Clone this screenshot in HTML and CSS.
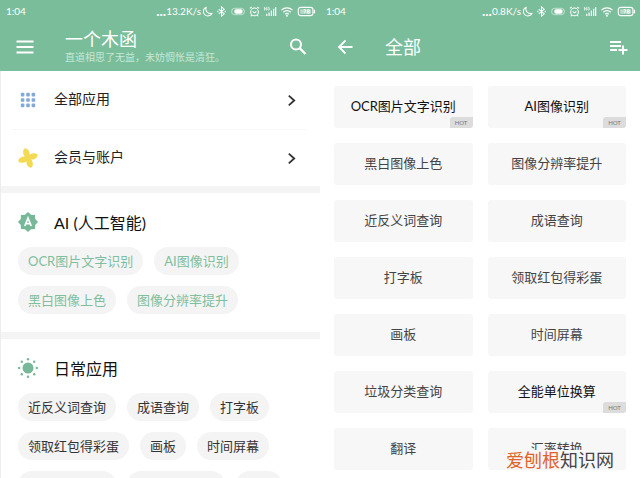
FILE: index.html
```html
<!DOCTYPE html>
<html lang="zh-CN">
<head>
    <meta charset="UTF-8">
    <meta name="viewport" content="width=device-width, initial-scale=1">
    <title>一个木函</title>
    <link rel="stylesheet" href="styles.css">
</head>
<body>
    <!-- Shared icons -->
    <svg class="sprite" aria-hidden="true">
        <symbol id="i-moon" viewBox="0 0 12 12"><path d="M4.5 1.2A5 5 0 1 0 11 7.9 5.2 5.2 0 0 1 4.5 1.2z" fill="none" stroke="currentColor" stroke-width="1.1" stroke-linejoin="round"/></symbol>
        <symbol id="i-bluetooth" viewBox="0 0 12 12"><path d="M3 3.5l6 5L6 11V1l3 2.5-6 5" fill="none" stroke="currentColor" stroke-width="1.1"/><circle cx="2" cy="6" r=".8" fill="currentColor"/><circle cx="10" cy="6" r=".8" fill="currentColor"/></symbol>
        <symbol id="i-pill" viewBox="0 0 16 12"><rect x="1" y="2.5" width="14" height="7" rx="3.5" fill="none" stroke="currentColor" opacity=".6"/><rect x="4" y="3.5" width="9" height="5" rx="2" fill="currentColor"/></symbol>
        <symbol id="i-alarm" viewBox="0 0 12 12"><circle cx="6" cy="6.5" r="4.2" fill="none" stroke="currentColor" stroke-width="1.1"/><path d="M1 2.7l2-1.6M11 2.7L9 1.1M4 6l2 1.5L8 6M3 10l-1 1.2M9 10l1 1.2" fill="none" stroke="currentColor" stroke-width="1.1"/></symbol>
        <symbol id="i-signal" viewBox="0 0 14 12"><path d="M3.5 11V8.5M6 11V7M8.5 11V5M11 11V3M13.2 11V1" stroke="currentColor" stroke-width="1.3"/><path d="M1 1v4M3 1v4M1 3h2M4.7 1.5v3h1l1-1v-1l-1-1z" fill="none" stroke="currentColor" stroke-width=".7"/></symbol>
        <symbol id="i-wifi" viewBox="0 0 14 12"><path d="M1 4.5a8.5 8.5 0 0 1 12 0M3 6.8a5.6 5.6 0 0 1 8 0M5 9a3 3 0 0 1 4 0" fill="none" stroke="currentColor" stroke-width="1.4"/><circle cx="7" cy="10.6" r="1" fill="currentColor"/></symbol>
        <symbol id="i-battery" viewBox="0 0 20 12"><rect x="1" y="1.5" width="16" height="9" rx="2.5" fill="none" stroke="currentColor" stroke-width="1.2"/><rect x="3" y="3.5" width="12" height="5" rx="1" fill="currentColor" opacity=".45"/><path d="M18.6 4v4" stroke="currentColor" stroke-width="1.5"/><path d="M7 4h2l-1 4M11 4h2v4h-2zM11 6h2" fill="none" stroke="currentColor" stroke-width=".8"/></symbol>
        <symbol id="i-chevron" viewBox="0 0 12 12"><path d="M3.5 1.5L8.500 6l-5 4.500" fill="none" stroke="currentColor" stroke-width="1.7"/></symbol>
    </svg>

    <main class="screens">
        <section class="screen screen-home">
            <header class="header">
                <div class="status-bar">
                    <span>1:04</span>
                    <div class="status-icons">
                        <span class="dots">...</span><span class="speed">13.2K/s</span>
                        <svg class="s-icon"><use href="#i-moon"/></svg>
                        <svg class="s-icon"><use href="#i-bluetooth"/></svg>
                        <svg class="s-icon s-pill"><use href="#i-pill"/></svg>
                        <svg class="s-icon"><use href="#i-alarm"/></svg>
                        <svg class="s-icon s-wide"><use href="#i-signal"/></svg>
                        <svg class="s-icon s-wide"><use href="#i-wifi"/></svg>
                        <svg class="s-icon s-battery"><use href="#i-battery"/></svg>
                    </div>
                </div>
                <div class="toolbar">
                    <button class="icon-btn" aria-label="菜单">
                        <svg viewBox="0 0 20 20"><path d="M1.500 4.500h17M1.500 10h17M1.500 15.500h17" stroke="currentColor" stroke-width="2"/></svg>
                    </button>
                    <div class="toolbar-title">
                        <h1>一个木函</h1>
                        <p>直道相思了无益，未妨惆怅是清狂。</p>
                    </div>
                    <button class="icon-btn" aria-label="搜索">
                        <svg viewBox="0 0 20 20"><circle cx="8" cy="7.500" r="5" fill="none" stroke="currentColor" stroke-width="2"/><path d="M11.500 11l6 6" stroke="currentColor" stroke-width="2.4"/></svg>
                    </button>
                </div>
            </header>

            <nav class="menu">
                <a class="menu-item" href="#all">
                    <svg class="menu-icon" viewBox="0 0 20 20" fill="#82a9d8">
                        <rect x="2" y="2" width="4" height="4" rx="1"/><rect x="8" y="2" width="4" height="4" rx="1"/><rect x="14" y="2" width="4" height="4" rx="1"/>
                        <rect x="2" y="8" width="4" height="4" rx="1"/><rect x="8" y="8" width="4" height="4" rx="1"/><rect x="14" y="8" width="4" height="4" rx="1"/>
                        <rect x="2" y="14" width="4" height="4" rx="1"/><rect x="8" y="14" width="4" height="4" rx="1"/><rect x="14" y="14" width="4" height="4" rx="1"/>
                    </svg>
                    <span>全部应用</span>
                    <svg class="chevron"><use href="#i-chevron"/></svg>
                </a>
                <a class="menu-item" href="#account">
                    <svg class="menu-icon" viewBox="0 0 20 20" fill="#f3da55">
                        <path id="blade" d="M10 11C5.500 9.500 4 4 6 1C7 0 8 .3 9 1C12 3 12.500 7 10 11z"/>
                        <use href="#blade" transform="rotate(90 10 10)"/>
                        <use href="#blade" transform="rotate(180 10 10)"/>
                        <use href="#blade" transform="rotate(270 10 10)"/>
                    </svg>
                    <span>会员与账户</span>
                    <svg class="chevron"><use href="#i-chevron"/></svg>
                </a>
            </nav>

            <section class="group">
                <h2 class="group-title">
                    <svg class="menu-icon" viewBox="0 0 20 20">
                        <path d="M10 0l3 2.8 4.100.1.1 4.100L20 10l-2.800 3-.1 4.100-4.100.1L10 20l-3-2.800-4.100-.1-.1-4.100L0 10l2.800-3 .1-4.100L7 2.800z" fill="#76b898"/>
                        <path d="M6.8 14L10 6l3.200 8M8 11.600h4" fill="none" stroke="#fff" stroke-width="1.7"/>
                    </svg>
                    AI (人工智能)
                </h2>
                <div class="chips chips-green">
                    <button class="chip">OCR图片文字识别</button>
                    <button class="chip">AI图像识别</button>
                    <button class="chip">黑白图像上色</button>
                    <button class="chip">图像分辨率提升</button>
                </div>
            </section>

            <section class="group">
                <h2 class="group-title">
                    <svg class="menu-icon" viewBox="0 0 20 20" fill="#76b898">
                        <circle cx="10" cy="10" r="5.5"/>
                        <circle cx="10" cy="1.2" r="1.2"/><circle cx="10" cy="18.8" r="1.2"/><circle cx="1.2" cy="10" r="1.2"/><circle cx="18.8" cy="10" r="1.2"/>
                        <circle cx="3.8" cy="3.8" r="1.2"/><circle cx="16.2" cy="3.8" r="1.2"/><circle cx="3.8" cy="16.2" r="1.2"/><circle cx="16.2" cy="16.2" r="1.2"/>
                    </svg>
                    日常应用
                </h2>
                <div class="chips">
                    <button class="chip">近反义词查询</button>
                    <button class="chip">成语查询</button>
                    <button class="chip">打字板</button>
                    <button class="chip">领取红包得彩蛋</button>
                    <button class="chip">画板</button>
                    <button class="chip">时间屏幕</button>
                    <button class="chip">垃圾分类查询</button>
                    <button class="chip">全能单位换算</button>
                    <button class="chip">翻译</button>
                </div>
            </section>
        </section>

        <section class="screen">
            <header class="header">
                <div class="status-bar">
                    <span>1:04</span>
                    <div class="status-icons">
                        <span class="dots">...</span><span class="speed">0.8K/s</span>
                        <svg class="s-icon"><use href="#i-moon"/></svg>
                        <svg class="s-icon"><use href="#i-bluetooth"/></svg>
                        <svg class="s-icon s-pill"><use href="#i-pill"/></svg>
                        <svg class="s-icon"><use href="#i-alarm"/></svg>
                        <svg class="s-icon s-wide"><use href="#i-signal"/></svg>
                        <svg class="s-icon s-wide"><use href="#i-wifi"/></svg>
                        <svg class="s-icon s-battery"><use href="#i-battery"/></svg>
                    </div>
                </div>
                <div class="toolbar">
                    <button class="icon-btn" aria-label="返回">
                        <svg viewBox="0 0 20 20"><path d="M17.500 10H4M10.500 3.500L4 10l6.500 6.500" fill="none" stroke="currentColor" stroke-width="1.8"/></svg>
                    </button>
                    <div class="toolbar-title">
                        <h1>全部</h1>
                    </div>
                    <button class="icon-btn" aria-label="添加">
                        <svg viewBox="0 0 20 20"><path d="M2 5h11M2 9h11M2 13h7M15 8.500v9M10.500 13h9" stroke="currentColor" stroke-width="2"/></svg>
                    </button>
                </div>
            </header>

            <div class="cards">
                <button class="card card-hot">OCR图片文字识别<span class="badge">HOT</span></button>
                <button class="card card-hot">AI图像识别<span class="badge">HOT</span></button>
                <button class="card">黑白图像上色</button>
                <button class="card">图像分辨率提升</button>
                <button class="card">近反义词查询</button>
                <button class="card">成语查询</button>
                <button class="card">打字板</button>
                <button class="card">领取红包得彩蛋</button>
                <button class="card">画板</button>
                <button class="card">时间屏幕</button>
                <button class="card">垃圾分类查询</button>
                <button class="card card-hot">全能单位换算<span class="badge">HOT</span></button>
                <button class="card">翻译</button>
                <button class="card">汇率转换</button>
            </div>
        </section>
    </main>

    <div class="watermark"><span>爱刨根</span>知识网</div>
</body>
</html>
```

FILE: styles.css
```css
* {
    box-sizing: border-box;
}

body {
    margin: 0;
    background: #fff;
    color: #222;
    font-family: Lato, "Noto Sans CJK SC", sans-serif;
    font-size: 13px;
}

h1, h2, p {
    margin: 0;
}

button {
    border: none;
    padding: 0;
    font: inherit;
    color: inherit;
    cursor: pointer;
}

.sprite {
    position: absolute;
    width: 0;
    height: 0;
}

.screens {
    display: grid;
    grid-template-columns: 1fr 1fr;
    height: 100vh;
    overflow: hidden;
}

.screen {
    min-width: 0;
}

.screen-home {
    border-left: 1px solid #ededed;
}

/* Header */
.header {
    background: #7abd9b;
    color: #fff;
    height: 71px;
}

.screen-home .header {
    margin-left: -1px;
}

.status-bar {
    display: flex;
    justify-content: space-between;
    align-items: center;
    height: 22px;
    padding: 0 4px 0 6px;
    font-size: 10px;
}

.status-icons {
    display: flex;
    align-items: center;
    gap: 3px;
}

.dots {
    font-weight: 700;
    font-size: 14px;
    line-height: 14px;
    margin-right: -3px;
}

.speed {
    margin-right: -2px;
}

.s-icon {
    width: 11px;
    height: 11px;
}

.s-pill {
    width: 16px;
}

.s-wide {
    width: 14px;
}

.s-battery {
    width: 19px;
}

.toolbar {
    display: flex;
    align-items: center;
    height: 49px;
    padding: 0 12px 0 15px;
}

.icon-btn {
    background: none;
    width: 20px;
    height: 20px;
}

.icon-btn svg {
    display: block;
    width: 20px;
    height: 20px;
}

.toolbar-title {
    flex: 1;
    margin-left: 30px;
}

.toolbar-title h1 {
    font-size: 18px;
    line-height: 20px;
    font-weight: 400;
}

.toolbar-title p {
    font-size: 10px;
    line-height: 16px;
    color: #c5e8d5;
}

/* Menu */
.menu {
    border-bottom: 7px solid #f4f4f4;
}

.menu-item {
    display: flex;
    align-items: center;
    height: 58px;
    margin: 0 14px 0 12px;
    padding: 0 8px 0 5px;
    color: #222;
    font-size: 14px;
    line-height: 18px;
    text-decoration: none;
}

.menu-item + .menu-item {
    height: 57px;
    border-top: 1px solid #f6f6f6;
}

.menu-item span {
    flex: 1;
    padding-bottom: 2px;
}

.menu-icon {
    width: 20px;
    height: 20px;
    margin-right: 16px;
}

.menu-item:first-child .menu-icon {
    padding: 1px;
}

.chevron {
    width: 13px;
    height: 13px;
    color: #333;
}

/* Groups */
.group {
    padding: 18px 17px;
    border-bottom: 7px solid #f4f4f4;
}

.group-title {
    display: flex;
    align-items: center;
    height: 22px;
    margin-bottom: 14px;
    font-size: 16px;
    font-weight: 400;
    color: #111;
}

.chips {
    display: flex;
    flex-wrap: wrap;
    gap: 11px;
}

.chip {
    height: 28px;
    padding: 0 10px 1px;
    border-radius: 14px;
    background: #f4f4f4;
    color: #333;
    white-space: nowrap;
}

.chips-green .chip {
    color: #7fbf9f;
}

/* Cards */
.cards {
    display: grid;
    grid-template-columns: 1fr 1fr;
    gap: 15px;
    padding: 15px 14px;
}

.card {
    position: relative;
    height: 42px;
    padding-bottom: 3px;
    border-radius: 3px;
    background: #f7f7f7;
    color: #444;
}

.card-hot {
    color: #111;
}

.badge {
    position: absolute;
    right: 0;
    bottom: 0;
    width: 23px;
    border-radius: 3px 0;
    background: #dcdcdc;
    color: #777;
    font-size: 6px;
    line-height: 11px;
}

.watermark {
    position: absolute;
    right: 26px;
    bottom: 8px;
    background: #f7f7f7;
    color: #444;
    font-size: 18px;
    line-height: 20px;
}

.watermark span {
    color: #e0642a;
}
```
